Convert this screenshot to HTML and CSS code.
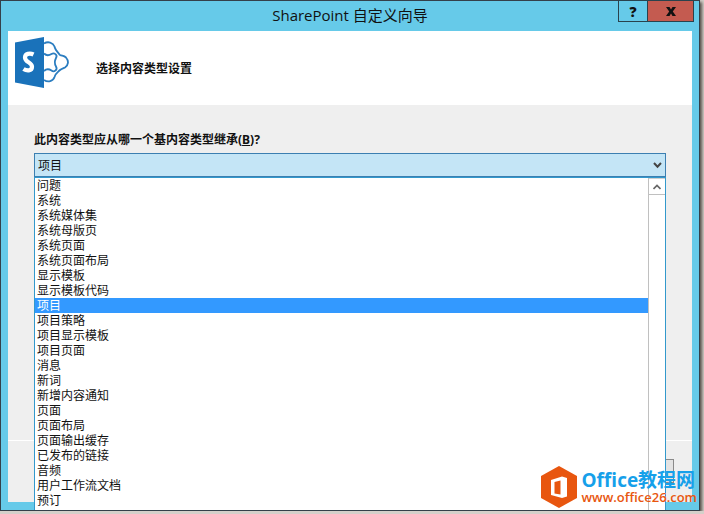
FILE: index.html
```html
<!DOCTYPE html>
<html lang="zh-CN">

<head>
  <meta charset="utf-8">
  <title>SharePoint 自定义向导</title>
  <link rel="stylesheet" href="styles.css">
</head>

<body>
  <div class="window">
    <header class="title-bar">
      <h1 class="title">SharePoint 自定义向导</h1>
      <div class="window-buttons">
        <button type="button" class="window-btn help-btn">?</button>
        <button type="button" class="window-btn close-btn" aria-label="关闭">
          <svg width="10" height="9" viewBox="0 0 10 9"><path d="M0 0H3.5L5 2.4L6.5 0H10L6.8 4.5L10 9H6.5L5 6.6L3.5 9H0L3.2 4.5Z" fill="#111"/></svg>
        </button>
      </div>
    </header>

    <main class="client">
      <div class="page-header">
        <svg class="logo" width="54" height="52" viewBox="0 0 54 52">
          <g fill="none" stroke="#2b7dc0" stroke-width="1.8">
            <path d="M29 6.500C33 4 38 5.500 39.500 9.500C40 12.500 42 14.500 45 18C47 19 49 18.500 51 20.500C54 24 53.500 28 50 30.500C48 31.500 46.500 31.500 45 33C42 36 40 37 39.500 40C38 44.500 33 45.500 29 43"/>
            <path d="M29 16.500C32 19.500 35 18 36.500 17C39 15.500 43 17.500 41 21C39.500 24 39.500 27 41 29.500C43 33 39 35.500 36.500 33.500C35 32.500 32 31 29 34"/>
          </g>
          <path d="M0 5.500L29 0V51L0 45.500Z" fill="#1a72ba"/>
          <path d="M18.500 17.500C15 15.800 10 16.500 10 20.500C10 25.800 17 24.800 17 29.800C17 34.500 11.500 34 8.500 32" fill="none" stroke="#fff" stroke-width="4.200"/>
        </svg>
        <h2 class="page-title">选择内容类型设置</h2>
      </div>

      <div class="page-body">
        <label class="label" for="base-type">此内容类型应从哪一个基内容类型继承(<u>B</u>)?</label>
        <div class="combo">
          <select class="combo-select" id="base-type">
            <option>项目</option>
          </select>
          <svg class="combo-arrow" width="9" height="7" viewBox="0 0 9 7"><path d="M1 1L4.500 4.800L8 1" fill="none" stroke="#444" stroke-width="2"/></svg>
          <div class="dropdown">
            <ul class="options" role="listbox" aria-label="内容类型">
              <li role="option">问题</li>
              <li role="option">系统</li>
              <li role="option">系统媒体集</li>
              <li role="option">系统母版页</li>
              <li role="option">系统页面</li>
              <li role="option">系统页面布局</li>
              <li role="option">显示模板</li>
              <li role="option">显示模板代码</li>
              <li role="option" class="selected" aria-selected="true">项目</li>
              <li role="option">项目策略</li>
              <li role="option">项目显示模板</li>
              <li role="option">项目页面</li>
              <li role="option">消息</li>
              <li role="option">新词</li>
              <li role="option">新增内容通知</li>
              <li role="option">页面</li>
              <li role="option">页面布局</li>
              <li role="option">页面输出缓存</li>
              <li role="option">已发布的链接</li>
              <li role="option">音频</li>
              <li role="option">用户工作流文档</li>
              <li role="option">预订</li>
            </ul>
            <div class="scrollbar">
              <button type="button" class="scroll-btn" aria-label="向上滚动">
                <svg width="8" height="6" viewBox="0 0 8 6"><path d="M0.500 5L4 1.500L7.500 5" fill="none" stroke="#666" stroke-width="1.700"/></svg>
              </button>
            </div>
          </div>
        </div>
      </div>

      <footer class="page-footer">
        <button type="button" class="footer-btn" aria-label="取消"></button>
      </footer>
    </main>
  </div>

  <div class="watermark">
    <svg width="36" height="42" viewBox="0 0 36 42">
      <path d="M18 0L36 10V32L18 42L0 32V10Z" fill="#e8560f"/>
      <path d="M10 14L21 10.500L26 12V30.500L21 32L10 29Z" fill="#fff"/>
      <path d="M13.500 16L19.500 14.500V28.500L13.500 27.500Z" fill="#e8560f"/>
    </svg>
    <div class="watermark-text">
      <span class="watermark-name">Office教程网</span>
      <a class="watermark-link" href="http://www.office26.com">www.office26.com</a>
    </div>
  </div>
</body>

</html>
```

FILE: styles.css
```css
* {
    box-sizing: border-box;
}

body {
    margin: 0;
    background-color: #d5d0ca;
    color: #111;
    font-family: "Noto Sans", "Noto Sans CJK SC", sans-serif;
    font-size: 12px;
}

button,
select {
    font: inherit;
    color: inherit;
    padding: 0;
    border-radius: 0;
}

.window {
    display: flex;
    flex-direction: column;
    min-height: calc(100vh - 3px);
    margin-right: 4px;
    padding: 0 7px 8px;
    background-color: #66cae9;
    border: 1px solid #34404a;
    box-shadow: 2px 2px 3px #55504a;
}

/* title bar */
.title-bar {
    position: relative;
    height: 30px;
}

.title {
    margin: 0;
    font-family: "Open Sans", "Noto Sans CJK SC", sans-serif;
    font-size: 15px;
    font-weight: normal;
    line-height: 29px;
    text-align: center;
}

.window-buttons {
    position: absolute;
    top: -1px;
    right: -2px;
    display: flex;
}

.window-btn {
    display: flex;
    justify-content: center;
    align-items: center;
    height: 22px;
    border: 1px solid #29424d;
}

.help-btn {
    width: 29px;
    background-color: transparent;
    border-right: none;
    font-family: "Open Sans", sans-serif;
    font-size: 14px;
    font-weight: 800;
}

.close-btn {
    width: 47px;
    background-color: #c45b50;
}

/* wizard page */
.client {
    display: flex;
    flex-direction: column;
    flex: 1;
    background-color: #efefef;
}

.page-header {
    display: flex;
    align-items: center;
    gap: 27px;
    height: 74px;
    padding: 0 7px 10px;
    background-color: #fff;
}

.page-title {
    margin: 0;
    padding-top: 12px;
    font-size: 12px;
    line-height: 16px;
}

.page-body {
    flex: 1;
    padding: 27px 26px 0;
}

.label {
    display: block;
    height: 21px;
    font-weight: bold;
    line-height: 16px;
}

.combo {
    position: relative;
}

.combo-select {
    display: block;
    appearance: none;
    width: 100%;
    height: 24px;
    padding-left: 3px;
    background-color: #c4e5f6;
    border: 1px solid #3c7fb1;
}

.combo-arrow {
    position: absolute;
    top: 9px;
    right: 4px;
}

.dropdown {
    position: absolute;
    top: 100%;
    left: 0;
    right: 0;
    z-index: 1;
    display: flex;
    padding-bottom: 2px;
    background-color: #fff;
    border: 1px solid #3399cc;
    border-bottom: none;
}

.options {
    flex: 1;
    margin: 0;
    padding: 0;
    list-style: none;
    line-height: 15px;
}

.options li {
    height: 15px;
    padding-left: 2px;
    overflow: hidden;
}

.options .selected {
    background-color: #3399ff;
    color: #fff;
}

.scrollbar {
    width: 17px;
    margin-bottom: -2px;
    border-left: 1px solid #c0c0c0;
}

.scroll-btn {
    display: flex;
    justify-content: center;
    align-items: center;
    width: 100%;
    height: 17px;
    background-color: #fff;
    border: none;
    border-top: 1px solid #d0d0d0;
    border-bottom: 1px solid #c0c0c0;
}

.page-footer {
    display: flex;
    justify-content: flex-end;
    height: 62px;
    padding: 18px 18px 0;
    border-top: 1px solid #fff;
}

.footer-btn {
    width: 80px;
    height: 24px;
    background-color: #e3e3e3;
    border: 1px solid #8a8a8a;
}

/* site mark in the corner */
.watermark {
    position: absolute;
    right: 7px;
    bottom: 6px;
    z-index: 2;
    display: flex;
    align-items: center;
    gap: 5px;
}

.watermark-text {
    display: flex;
    flex-direction: column;
}

.watermark-name {
    color: #16a0ea;
    font-family: "Open Sans", "Noto Sans CJK SC", sans-serif;
    font-size: 19px;
    font-weight: bold;
    line-height: 20px;
}

.watermark-link {
    color: #e8560f;
    font-family: "Open Sans", sans-serif;
    font-size: 13px;
    font-weight: 600;
    line-height: 14px;
    text-decoration: none;
}
```
